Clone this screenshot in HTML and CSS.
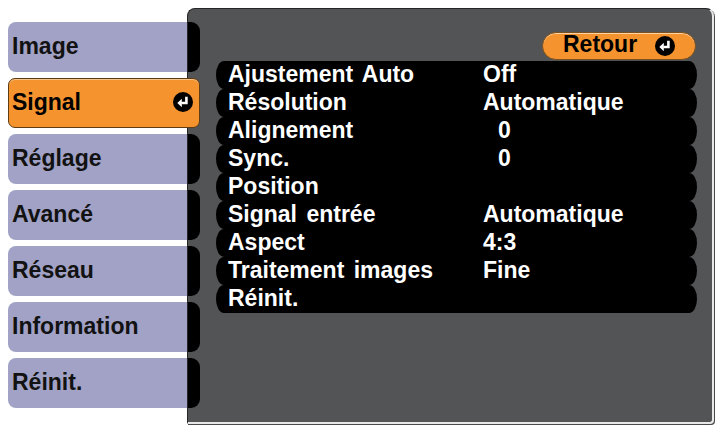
FILE: index.html
```html
<!DOCTYPE html>
<html lang="fr">
<head>
<meta charset="utf-8">
<title>Signal</title>
<link rel="stylesheet" href="styles.css">
</head>
<body>
<div class="screen">
  <nav class="tabs">
    <div class="tab">Image</div>
    <div class="tab active"><span>Signal</span>
      <svg class="enter" viewBox="0 0 20 20" aria-hidden="true"><circle cx="10" cy="10" r="10" fill="#000"/><path d="M13.4 4.8 V11 H8.4" fill="none" stroke="#fff" stroke-width="2.6" stroke-linejoin="miter"/><polygon points="4.3,11 8.8,6.8 8.8,15.2" fill="#fff"/></svg>
    </div>
    <div class="tab">Réglage</div>
    <div class="tab">Avancé</div>
    <div class="tab">Réseau</div>
    <div class="tab">Information</div>
    <div class="tab">Réinit.</div>
  </nav>
  <section class="panel">
    <div class="rail">
      <div class="link"></div>
      <div class="link off"></div>
      <div class="link"></div>
      <div class="link"></div>
      <div class="link"></div>
      <div class="link"></div>
      <div class="link"></div>
    </div>
    <div class="main">
      <div class="back"><span>Retour</span>
        <svg class="enter" viewBox="0 0 20 20" aria-hidden="true"><circle cx="10" cy="10" r="10" fill="#000"/><path d="M13.4 4.8 V11 H8.4" fill="none" stroke="#fff" stroke-width="2.6" stroke-linejoin="miter"/><polygon points="4.3,11 8.8,6.8 8.8,15.2" fill="#fff"/></svg>
      </div>
      <ul class="rows">
        <li class="row"><span class="label">Ajustement Auto</span><span class="value">Off</span></li>
        <li class="row"><span class="label">Résolution</span><span class="value">Automatique</span></li>
        <li class="row"><span class="label">Alignement</span><span class="value num">0</span></li>
        <li class="row"><span class="label">Sync.</span><span class="value num">0</span></li>
        <li class="row"><span class="label">Position</span></li>
        <li class="row"><span class="label">Signal entrée</span><span class="value">Automatique</span></li>
        <li class="row"><span class="label">Aspect</span><span class="value">4:3</span></li>
        <li class="row"><span class="label">Traitement images</span><span class="value">Fine</span></li>
        <li class="row"><span class="label">Réinit.</span></li>
      </ul>
    </div>
  </section>
</div>
</body>
</html>
```
FILE: styles.css
```css
html, body {
  margin: 0;
  padding: 0;
  background: #ffffff;
}

body {
  font-family: "Liberation Sans", Arial, sans-serif;
  font-weight: bold;
  font-size: 23px;
  word-spacing: 3px;
}

.screen {
  display: flex;
  align-items: flex-start;
  padding: 8px 0 0 8px;
  width: 720px;
  height: 429px;
  box-sizing: border-box;
}

.tabs {
  width: 179px;
  flex: 0 0 179px;
  display: flex;
  flex-direction: column;
  gap: 6px;
  padding-top: 14px;
}

.tab {
  height: 50px;
  box-sizing: border-box;
  background: #a1a2c5;
  color: #121212;
  border-radius: 8px 0 0 8px;
  padding: 0 0 2px 4px;
  line-height: 48px;
}

.tab.active {
  position: relative;
  z-index: 2;
  margin-right: -13px;
  background: #f5932f;
  color: #000;
  border: 1px solid #5e3c14;
  border-radius: 7px;
  padding: 0 6px 2px 3px;
  display: flex;
  align-items: center;
  justify-content: space-between;
  box-shadow: inset 0 1px 0 #f9c48c;
}

.enter {
  width: 20px;
  height: 20px;
  flex: 0 0 20px;
  display: block;
}

.panel {
  width: 527px;
  height: 416px;
  box-sizing: border-box;
  background: #525456;
  border-top: 1px solid #262626;
  border-left: 1px solid #262626;
  border-right: 2px solid #e8e8e8;
  border-bottom: 2px solid #e8e8e8;
  border-radius: 8px 8px 4px 0;
  box-shadow: 1px 1px 0 #4a4a4a;
  display: flex;
}

.rail {
  width: 12px;
  flex: 0 0 12px;
  display: flex;
  flex-direction: column;
  gap: 6px;
  padding-top: 13px;
}

.link {
  height: 50px;
  background: #000;
  border-radius: 0 9px 9px 0;
}

.link.off {
  background: transparent;
}

.main {
  flex: 1;
  display: flex;
  flex-direction: column;
  padding: 23px 15px 0 16px;
}

.back {
  align-self: flex-end;
  margin-right: 1px;
  width: 154px;
  height: 28px;
  box-sizing: border-box;
  background: #f5932f;
  color: #000;
  border: 1px solid #7a5020;
  border-radius: 14px;
  box-shadow: inset 0 1px 0 #fbd3a6;
  display: flex;
  align-items: center;
  gap: 18px;
  padding: 0 0 4px 20px;
  line-height: 22px;
}

.back .enter {
  margin-top: 4px;
}

.rows {
  list-style: none;
  margin: 1px 0 0 0;
  padding: 0;
}

.row {
  height: 28px;
  box-sizing: border-box;
  background: #000;
  color: #fff;
  border-radius: 8px / 14px;
  display: flex;
  padding: 0 0 2px 12px;
  line-height: 26px;
  white-space: nowrap;
}

.label {
  width: 255px;
  flex: 0 0 255px;
}

.value.num {
  padding-left: 15px;
}
```
